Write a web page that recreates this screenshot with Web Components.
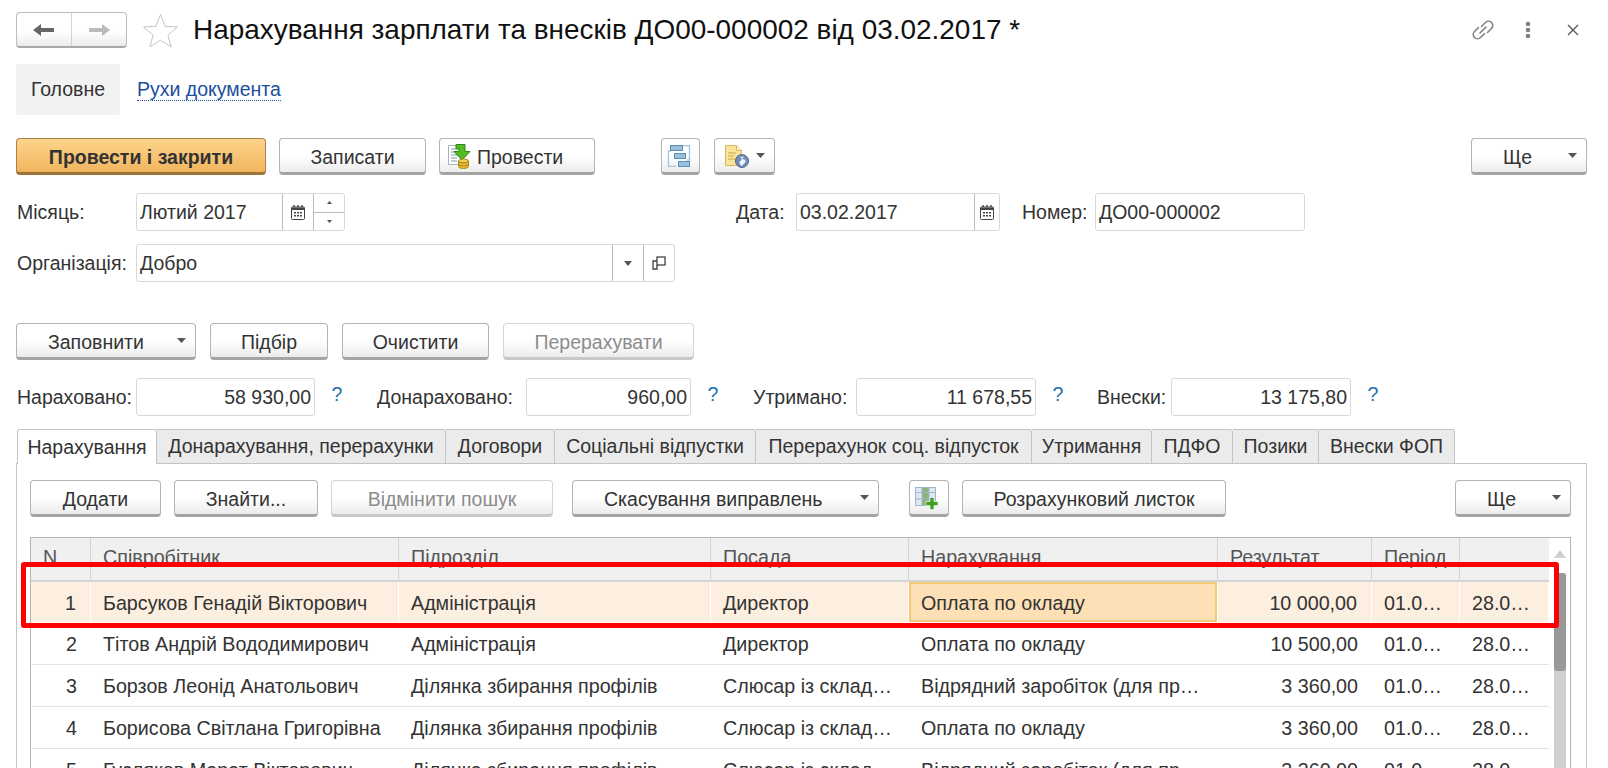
<!DOCTYPE html>
<html lang="uk">
<head>
<meta charset="utf-8">
<title>Нарахування зарплати та внесків</title>
<style>
  html, body { margin: 0; height: 768px; overflow: hidden; background: #fff; }
  body { font: 19.5px "Liberation Sans", Arial, sans-serif; color: #333; }
  .row { display: flex; align-items: center; padding-left: 16px; padding-right: 21px; }
  .push { margin-left: auto; }
</style>
</head>
<body>
<doc-header title="Нарахування зарплати та внесків ДО00-000002 від 03.02.2017 *"></doc-header>
<section-nav></section-nav>

<div class="row" style="margin-top:23px;gap:13px">
  <cmd-button primary style="width:250px">Провести і закрити</cmd-button>
  <cmd-button style="width:147px">Записати</cmd-button>
  <cmd-button icon="post" style="width:156px">Провести</cmd-button>
  <cmd-button icon="struct" style="width:39px;margin-left:53px"></cmd-button>
  <cmd-button icon="docglobe" drop style="width:61px;margin-left:1px"></cmd-button>
  <cmd-button drop class="push" style="width:116px">Ще</cmd-button>
</div>

<div class="row" style="margin-top:18px">
  <form-field label="Місяць:" label-width="120" width="209" value="Лютий 2017" buttons="calendar,spin"></form-field>
  <form-field label="Дата:" label-width="61" width="204" value="03.02.2017" buttons="calendar" btn-width="24" style="margin-left:390px"></form-field>
  <form-field label="Номер:" label-width="74" width="210" value="ДО00-000002" style="margin-left:21px"></form-field>
</div>
<div class="row" style="margin-top:13px">
  <form-field label="Організація:" label-width="120" width="539" value="Добро" buttons="drop,open"></form-field>
</div>

<div class="row" style="margin-top:41px;gap:14px">
  <cmd-button drop style="width:180px">Заповнити</cmd-button>
  <cmd-button style="width:118px">Підбір</cmd-button>
  <cmd-button style="width:147px">Очистити</cmd-button>
  <cmd-button disabled style="width:191px">Перерахувати</cmd-button>
</div>

<div class="row" style="margin-top:18px">
  <form-field label="Нараховано:" label-width="120" width="179" value="58 930,00" numeric hint></form-field>
  <form-field label="Донараховано:" label-width="150" width="165" value="960,00" numeric hint style="margin-left:28px"></form-field>
  <form-field label="Утримано:" label-width="104" width="180" value="11 678,55" numeric hint style="margin-left:28px"></form-field>
  <form-field label="Внески:" label-width="75" width="180" value="13 175,80" numeric hint style="margin-left:27px"></form-field>
</div>

<tab-bar style="margin-top:13px"></tab-bar>

<tab-panel>
  <div class="row" style="gap:13px;padding:0">
    <cmd-button style="width:131px">Додати</cmd-button>
    <cmd-button style="width:144px">Знайти...</cmd-button>
    <cmd-button disabled style="width:222px">Відмінити пошук</cmd-button>
    <cmd-button drop style="width:307px;margin-left:6px">Скасування виправлень</cmd-button>
    <cmd-button icon="tableadd" style="width:40px;margin-left:17px"></cmd-button>
    <cmd-button style="width:264px">Розрахунковий листок</cmd-button>
    <cmd-button drop class="push" style="width:116px">Ще</cmd-button>
  </div>
  <data-grid></data-grid>
</tab-panel>

<script>
const ICONS = {
  post: `<svg width="26" height="26" viewBox="0 0 26 26">
    <path d="M1.500 2.500h13v19h-13z" fill="#fff" stroke="#a8b4be"/>
    <path d="M4 6h5M4 9h6M4 12h7M4 15h6M4 18h6" stroke="#7f9cb8"/>
    <path d="M9 1.500h9v7h5l-8 8.500-8-8.500h5V6H9z" fill="#54bb22" stroke="#2f8a12" stroke-linejoin="round"/>
    <ellipse cx="16.500" cy="18" rx="5" ry="2" fill="#f3d04e" stroke="#a98a1c"/>
    <path d="M11.500 18v5.500c0 1 2.200 2 5 2s5-1 5-2V18c0 1-2.200 2-5 2s-5-1-5-2z" fill="#e9b92f" stroke="#a98a1c"/>
    <path d="M11.500 21c0 1 2.200 2 5 2s5-1 5-2" fill="none" stroke="#a98a1c"/>
  </svg>`,
  struct: `<svg width="24" height="22" viewBox="0 0 24 22">
    <path d="M4 6H1.500v15.500H9M15 .5h7.500V15H20" fill="none" stroke="#a5c6df" stroke-width="1.300"/>
    <rect x="3.500" y=".5" width="12" height="5" fill="#9cc0dc" stroke="#5a8fb8"/>
    <rect x="7.500" y="8.500" width="11" height="5" fill="#9cc0dc" stroke="#5a8fb8"/>
    <rect x="11.500" y="16.500" width="11" height="5" fill="#9cc0dc" stroke="#5a8fb8"/>
  </svg>`,
  docglobe: `<svg width="26" height="24" viewBox="0 0 26 24">
    <path d="M1.500 1.500h11l5 5v15h-16z" fill="#fbe39c" stroke="#d9b75a"/>
    <path d="M12.500 1.500v5h5" fill="#fff4cf" stroke="#d9b75a"/>
    <path d="M4 9h8M4 12h6M4 15h7" stroke="#caa94e"/>
    <circle cx="18" cy="17" r="6.500" fill="#6f8db5" stroke="#4f6a8c"/>
    <path d="M15 13c2 0 3 1 2.500 2.500S15 17 15.500 19s2 3 3 3c0-2 3-2.500 3-5s-3-1-3-2.500 2-1.500 2-2" fill="#eef3fa"/>
  </svg>`,
  tableadd: `<svg width="26" height="24" viewBox="0 0 26 24">
    <rect x="1.500" y="1.500" width="20" height="18" fill="#dce8f2" stroke="#9db6cb"/>
    <rect x="8" y="2" width="7" height="17" fill="#8fb27d"/>
    <path d="M1.500 6.500h20M1.500 13h20M8 1.500v18M15 1.500v18" stroke="#9db6cb" fill="none"/>
    <path d="M16 11.500h4v4h4v4h-4v4h-4v-4h-4v-4h4z" fill="#3f9e1e" stroke="#fff" stroke-width=".6"/>
  </svg>`
};

const ARROW = `<svg class="caret" width="9" height="5" viewBox="0 0 9 5"><path d="M0 0h9L4.500 5z" fill="#555"/></svg>`;

class DocHeader extends HTMLElement {
  constructor() {
    super();
    this.attachShadow({ mode: 'open' });
  }

  connectedCallback() {
    this.shadowRoot.innerHTML = /* html */`
    <style>
      :host { display: flex; align-items: center; height: 36px; padding: 12px 21px 0 16px; }
      .nav {
        display: flex; width: 111px; height: 36px; box-sizing: border-box;
        border: 1px solid #bdbdbd; border-bottom: 2px solid #a8a8a8; border-radius: 4px;
        background: linear-gradient(#fff 55%, #ececec);
      }
      .nav span { display: flex; flex: 1; align-items: center; justify-content: center; }
      .nav span + span { border-left: 1px solid #d4d4d4; }
      .star { margin-left: 16px; }
      h1 { margin: 0 0 0 15px; font: 400 27.950px "Liberation Sans", Arial, sans-serif; color: #111; white-space: nowrap; }
      .tools { display: flex; align-items: center; margin-left: auto; padding-right: 8px; }
      .dots { margin-left: 30px; }
      .close { margin-left: 36px; }
    </style>
    <div class="nav">
      <span><svg width="22" height="14" viewBox="0 0 22 14"><path d="M0 7l8-6v4h13v4H8v4z" fill="#666"/></svg></span>
      <span><svg width="22" height="14" viewBox="0 0 22 14"><path d="M22 7l-8-6v4H1v4h13v4z" fill="#bbb"/></svg></span>
    </div>
    <svg class="star" width="35" height="34" viewBox="0 0 35 34"><path d="M17.500 1.500l4.600 11.800 12.400.7-9.600 8 3.200 12-10.600-6.800-10.600 6.800 3.200-12-9.600-8 12.400-.7z" fill="#fff" stroke="#c4c4c4"/></svg>
    <h1>${this.getAttribute('title')}</h1>
    <div class="tools">
      <svg width="24" height="24" viewBox="0 0 24 24" fill="none" stroke="#808080" stroke-width="1.600" stroke-linecap="round"><path d="M10.500 8.500l4-4a4.200 4.200 0 0 1 6 6l-4 4"/><path d="M13.500 15.500l-4 4a4.200 4.200 0 0 1-6-6l4-4"/><path d="M9 15l6-6"/></svg>
      <svg class="dots" width="6" height="18" viewBox="0 0 6 18"><circle cx="3" cy="3" r="2.300" fill="#808080"/><circle cx="3" cy="9" r="2.300" fill="#808080"/><circle cx="3" cy="15" r="2.300" fill="#808080"/></svg>
      <svg class="close" width="12" height="12" viewBox="0 0 12 12"><path d="M1 1l10 10M11 1L1 11" stroke="#555" stroke-width="1.300"/></svg>
    </div>`;
  }
}

class SectionNav extends HTMLElement {
  constructor() {
    super();
    this.attachShadow({ mode: 'open' });
  }

  connectedCallback() {
    this.shadowRoot.innerHTML = /* html */`
    <style>
      :host { display: flex; align-items: center; margin: 16px 0 0 16px; height: 51px; }
      .on { display: flex; align-items: center; justify-content: center; width: 104px; height: 51px; background: #f2f2f2; border-radius: 3px; }
      a { margin-left: 17px; color: #1c4f9c; border-bottom: 1px dotted #1c4f9c; line-height: 21px; }
    </style>
    <div class="on">Головне</div>
    <a>Рухи документа</a>`;
  }
}

class CmdButton extends HTMLElement {
  constructor() {
    super();
    this.attachShadow({ mode: 'open' });
  }

  static get styles() {
    return /* css */`
    :host {
      display: flex; align-items: center; justify-content: center; position: relative;
      height: 37px; box-sizing: border-box; padding-top: 3px;
      border: 1px solid #b4b4b4; border-bottom: 3px solid #a4a4a4; border-radius: 4px;
      background: linear-gradient(#fff 50%, #ececec);
      color: #333; white-space: nowrap;
    }
    :host([primary]) {
      border-color: #a98248; border-bottom-color: #9c7438;
      background: linear-gradient(#fdd48c, #f2b55e);
      font-weight: 700; color: #333;
    }
    :host([disabled]) { border-color: #d4d4d4; border-bottom-color: #c8c8c8; color: #8c8c8c; }
    :host([drop]) { justify-content: flex-start; padding-left: 31px; }
    :host([icon]) { padding-top: 0; }
    :host([icon="post"]) { justify-content: flex-start; padding-left: 7px; }
    :host([icon]) slot { display: block; margin-left: 4px; padding-top: 3px; }
    .icon { display: inline-flex; }
    .caret { position: absolute; right: 9px; top: 14px; }
    :host([icon][drop]) { padding-left: 9px; }
    `;
  }

  connectedCallback() {
    const icon = this.getAttribute('icon');
    this.shadowRoot.innerHTML = /* html */`
    <style>${CmdButton.styles}</style>
    ${icon ? `<span class="icon">${ICONS[icon]}</span>` : ''}
    <slot></slot>
    ${this.hasAttribute('drop') ? ARROW : ''}`;
  }
}

class FormField extends HTMLElement {
  constructor() {
    super();
    this.attachShadow({ mode: 'open' });
  }

  static get styles() {
    return /* css */`
    :host { display: flex; align-items: center; }
    label { flex: none; box-sizing: border-box; padding-left: 1px; white-space: nowrap; }
    .box {
      display: flex; box-sizing: border-box; height: 38px;
      border: 1px solid #d8d8d8; border-radius: 3px; background: #fff;
    }
    .val { flex: 1; padding: 0 3px; line-height: 36px; white-space: nowrap; overflow: hidden; }
    .btn { display: flex; flex: none; align-items: center; justify-content: center; width: 30px; border-left: 1px solid #bdbdbd; }
    .spin { flex-direction: column; }
    .spin div { display: flex; flex: 1; align-items: center; justify-content: center; width: 100%; }
    .spin div + div { border-top: 1px solid #bdbdbd; }
    .hint { flex: none; width: 22px; margin: 0 0 0 11px; padding-bottom: 6px; color: #1c6fb0; text-align: center; }
    `;
  }

  button(kind, w) {
    const s = w ? ` style="width:${w}px"` : '';
    if (kind === 'calendar') {
      return `<div class="btn"${s}><svg width="14" height="15" viewBox="0 0 14 15"><path d="M3 0v3M7 0v3M11 0v3" stroke="#444" stroke-width="1.400"/><rect x=".5" y="2" width="13" height="12.500" rx="1" fill="#fff" stroke="#444"/><path d="M1 2.500h12V5H1z" fill="#444"/><path d="M3 7h2v1.500H3zM6 7h2v1.500H6zM9 7h2v1.500H9zM3 10h2v1.500H3zM6 10h2v1.500H6zM9 10h2v1.500H9z" fill="#444"/></svg></div>`;
    }
    if (kind === 'spin') {
      return `<div class="btn spin"${s}><div><svg width="5" height="3" viewBox="0 0 5 3"><path d="M0 3h5L2.500 0z" fill="#555"/></svg></div><div><svg width="5" height="3" viewBox="0 0 5 3"><path d="M0 0h5L2.500 3z" fill="#555"/></svg></div></div>`;
    }
    if (kind === 'drop') {
      return `<div class="btn"${s}><svg width="8" height="5" viewBox="0 0 8 5"><path d="M0 0h8L4 5z" fill="#555"/></svg></div>`;
    }
    return `<div class="btn"${s}><svg width="14" height="14" viewBox="0 0 14 14" fill="none" stroke="#444" stroke-width="1.300"><rect x="5" y="1" width="8" height="8"/><path d="M5 5H1v8h4V9"/></svg></div>`;
  }

  connectedCallback() {
    const buttons = (this.getAttribute('buttons') || '').split(',').filter(Boolean);
    const w = this.getAttribute('btn-width');
    this.shadowRoot.innerHTML = /* html */`
    <style>${FormField.styles}</style>
    <label style="width:${this.getAttribute('label-width')}px">${this.getAttribute('label')}</label>
    <div class="box" style="width:${this.getAttribute('width')}px">
      <div class="val" style="text-align:${this.hasAttribute('numeric') ? 'right' : 'left'}">${this.getAttribute('value')}</div>
      ${buttons.map(b => this.button(b, w)).join('')}
    </div>
    ${this.hasAttribute('hint') ? '<span class="hint">?</span>' : ''}`;
  }
}

class TabBar extends HTMLElement {
  constructor() {
    super();
    this.attachShadow({ mode: 'open' });
  }

  connectedCallback() {
    const tabs = [
      ['Нарахування', 140], ['Донарахування, перерахунки', 289], ['Договори', 109],
      ['Соціальні відпустки', 201], ['Перерахунок соц. відпусток', 276], ['Утримання', 120],
      ['ПДФО', 81], ['Позики', 86], ['Внески ФОП', 136],
    ];
    this.shadowRoot.innerHTML = /* html */`
    <style>
      :host { display: flex; position: relative; z-index: 1; height: 35px; padding-left: 17px; margin-bottom: -1px; }
      div {
        display: flex; align-items: center; justify-content: center; box-sizing: border-box; height: 35px;
        background: #ebebeb; border: 1px solid #c4c4c4; border-left: 0; border-radius: 0 3px 0 0; white-space: nowrap;
      }
      div.on { background: #fff; border-left: 1px solid #c4c4c4; border-bottom: 0; border-radius: 3px 3px 0 0; }
    </style>
    ${tabs.map(([name, w], i) => `<div class="${i ? '' : 'on'}" style="width:${w}px">${name}</div>`).join('')}`;
  }
}

class TabPanel extends HTMLElement {
  constructor() {
    super();
    this.attachShadow({ mode: 'open' });
  }

  connectedCallback() {
    this.shadowRoot.innerHTML = /* html */`
    <style>
      :host {
        display: block; margin: 0 21px 0 16px; padding: 16px 15px 0 13px;
        border: 1px solid #c4c4c4; border-bottom: 0; height: 320px; box-sizing: border-box;
      }
    </style>
    <slot></slot>`;
  }
}

class DataGrid extends HTMLElement {
  constructor() {
    super();
    this.attachShadow({ mode: 'open' });
  }

  static get styles() {
    return /* css */`
    :host {
      display: flex; position: relative; margin-top: 20px; height: 260px; box-sizing: border-box;
      border: 1px solid #b4b4b4; border-bottom: 0; font-size: 19.700px;
    }
    .table { width: 1518px; flex: none; }
    .tr { display: grid; grid-template-columns: 60px 308px 312px 198px 309px 154px 88px 89px; height: 42px; border-bottom: 1px solid #e4e4e4; box-sizing: border-box; }
    .th { height: 44px; background: #f0f0f0; border-bottom: 2px solid #d4d4d4; color: #555; }
    .td { padding: 0 12px; line-height: 42px; white-space: nowrap; overflow: hidden; }
    .th .td { line-height: 38px; border-right: 1px solid #d4d4d4; }
    .th .td:last-child { border-right: 0; }
    .num { padding-right: 14px; text-align: right; }
    .sel { background: #fdefdf; height: 41px; border-bottom: 1px solid #fff; }
    .sel .td { border-right: 1px solid #fff; }
    .sel .cur { background: #fde0b6; box-shadow: inset 0 0 0 2px #f5c877; }
    .bar { display: flex; flex: 1; flex-direction: column; align-items: center; }
    .up { margin-top: 12px; }
    .track { width: 12px; flex: 1; margin-top: 15px; background: #cfcfcf; border-radius: 3px 3px 0 0; }
    .thumb { height: 98px; background: #999; border-radius: 3px; }
    .mark {
      position: absolute; left: -10px; top: 24px; width: 1538px; height: 66px; box-sizing: border-box;
      border: 5px solid #f00; border-radius: 3px; pointer-events: none;
    }
    `;
  }

  prepareRows() {
    const shop = 'Ділянка збирання профілів';
    const fitter = 'Слюсар із склад…';
    const piece = 'Відрядний заробіток (для пр…';
    const base = 'Оплата по окладу';
    const rows = [
      ['Барсуков Генадій Вікторович', 'Адміністрація', 'Директор', base, '10 000,00'],
      ['Тітов Андрій Вододимирович', 'Адміністрація', 'Директор', base, '10 500,00'],
      ['Борзов Леонід Анатольович', shop, fitter, piece, '3 360,00'],
      ['Борисова Світлана Григорівна', shop, fitter, base, '3 360,00'],
      ['Гусляков Марат Вікторович', shop, fitter, piece, '3 360,00'],
    ];
    return rows.map((r, i) => /* html */`
      <div class="tr ${i ? '' : 'sel'}">
        <div class="td num">${i + 1}</div>
        <div class="td">${r[0]}</div>
        <div class="td">${r[1]}</div>
        <div class="td">${r[2]}</div>
        <div class="td ${i ? '' : 'cur'}">${r[3]}</div>
        <div class="td num">${r[4]}</div>
        <div class="td">01.0…</div>
        <div class="td">28.0…</div>
      </div>`).join('');
  }

  connectedCallback() {
    this.shadowRoot.innerHTML = /* html */`
    <style>${DataGrid.styles}</style>
    <div class="table">
      <div class="tr th">
        <div class="td">N</div><div class="td">Співробітник</div><div class="td">Підрозділ</div>
        <div class="td">Посада</div><div class="td">Нарахування</div><div class="td">Результат</div>
        <div class="td">Період</div><div class="td"></div>
      </div>
      ${this.prepareRows()}
    </div>
    <div class="bar">
      <svg class="up" width="12" height="8" viewBox="0 0 12 8"><path d="M0 8h12L6 0z" fill="#d0d0d0"/></svg>
      <div class="track"><div class="thumb"></div></div>
    </div>
    <div class="mark"></div>`;
  }
}

customElements.define('doc-header', DocHeader);
customElements.define('section-nav', SectionNav);
customElements.define('cmd-button', CmdButton);
customElements.define('form-field', FormField);
customElements.define('tab-bar', TabBar);
customElements.define('tab-panel', TabPanel);
customElements.define('data-grid', DataGrid);
</script>
</body>
</html>
